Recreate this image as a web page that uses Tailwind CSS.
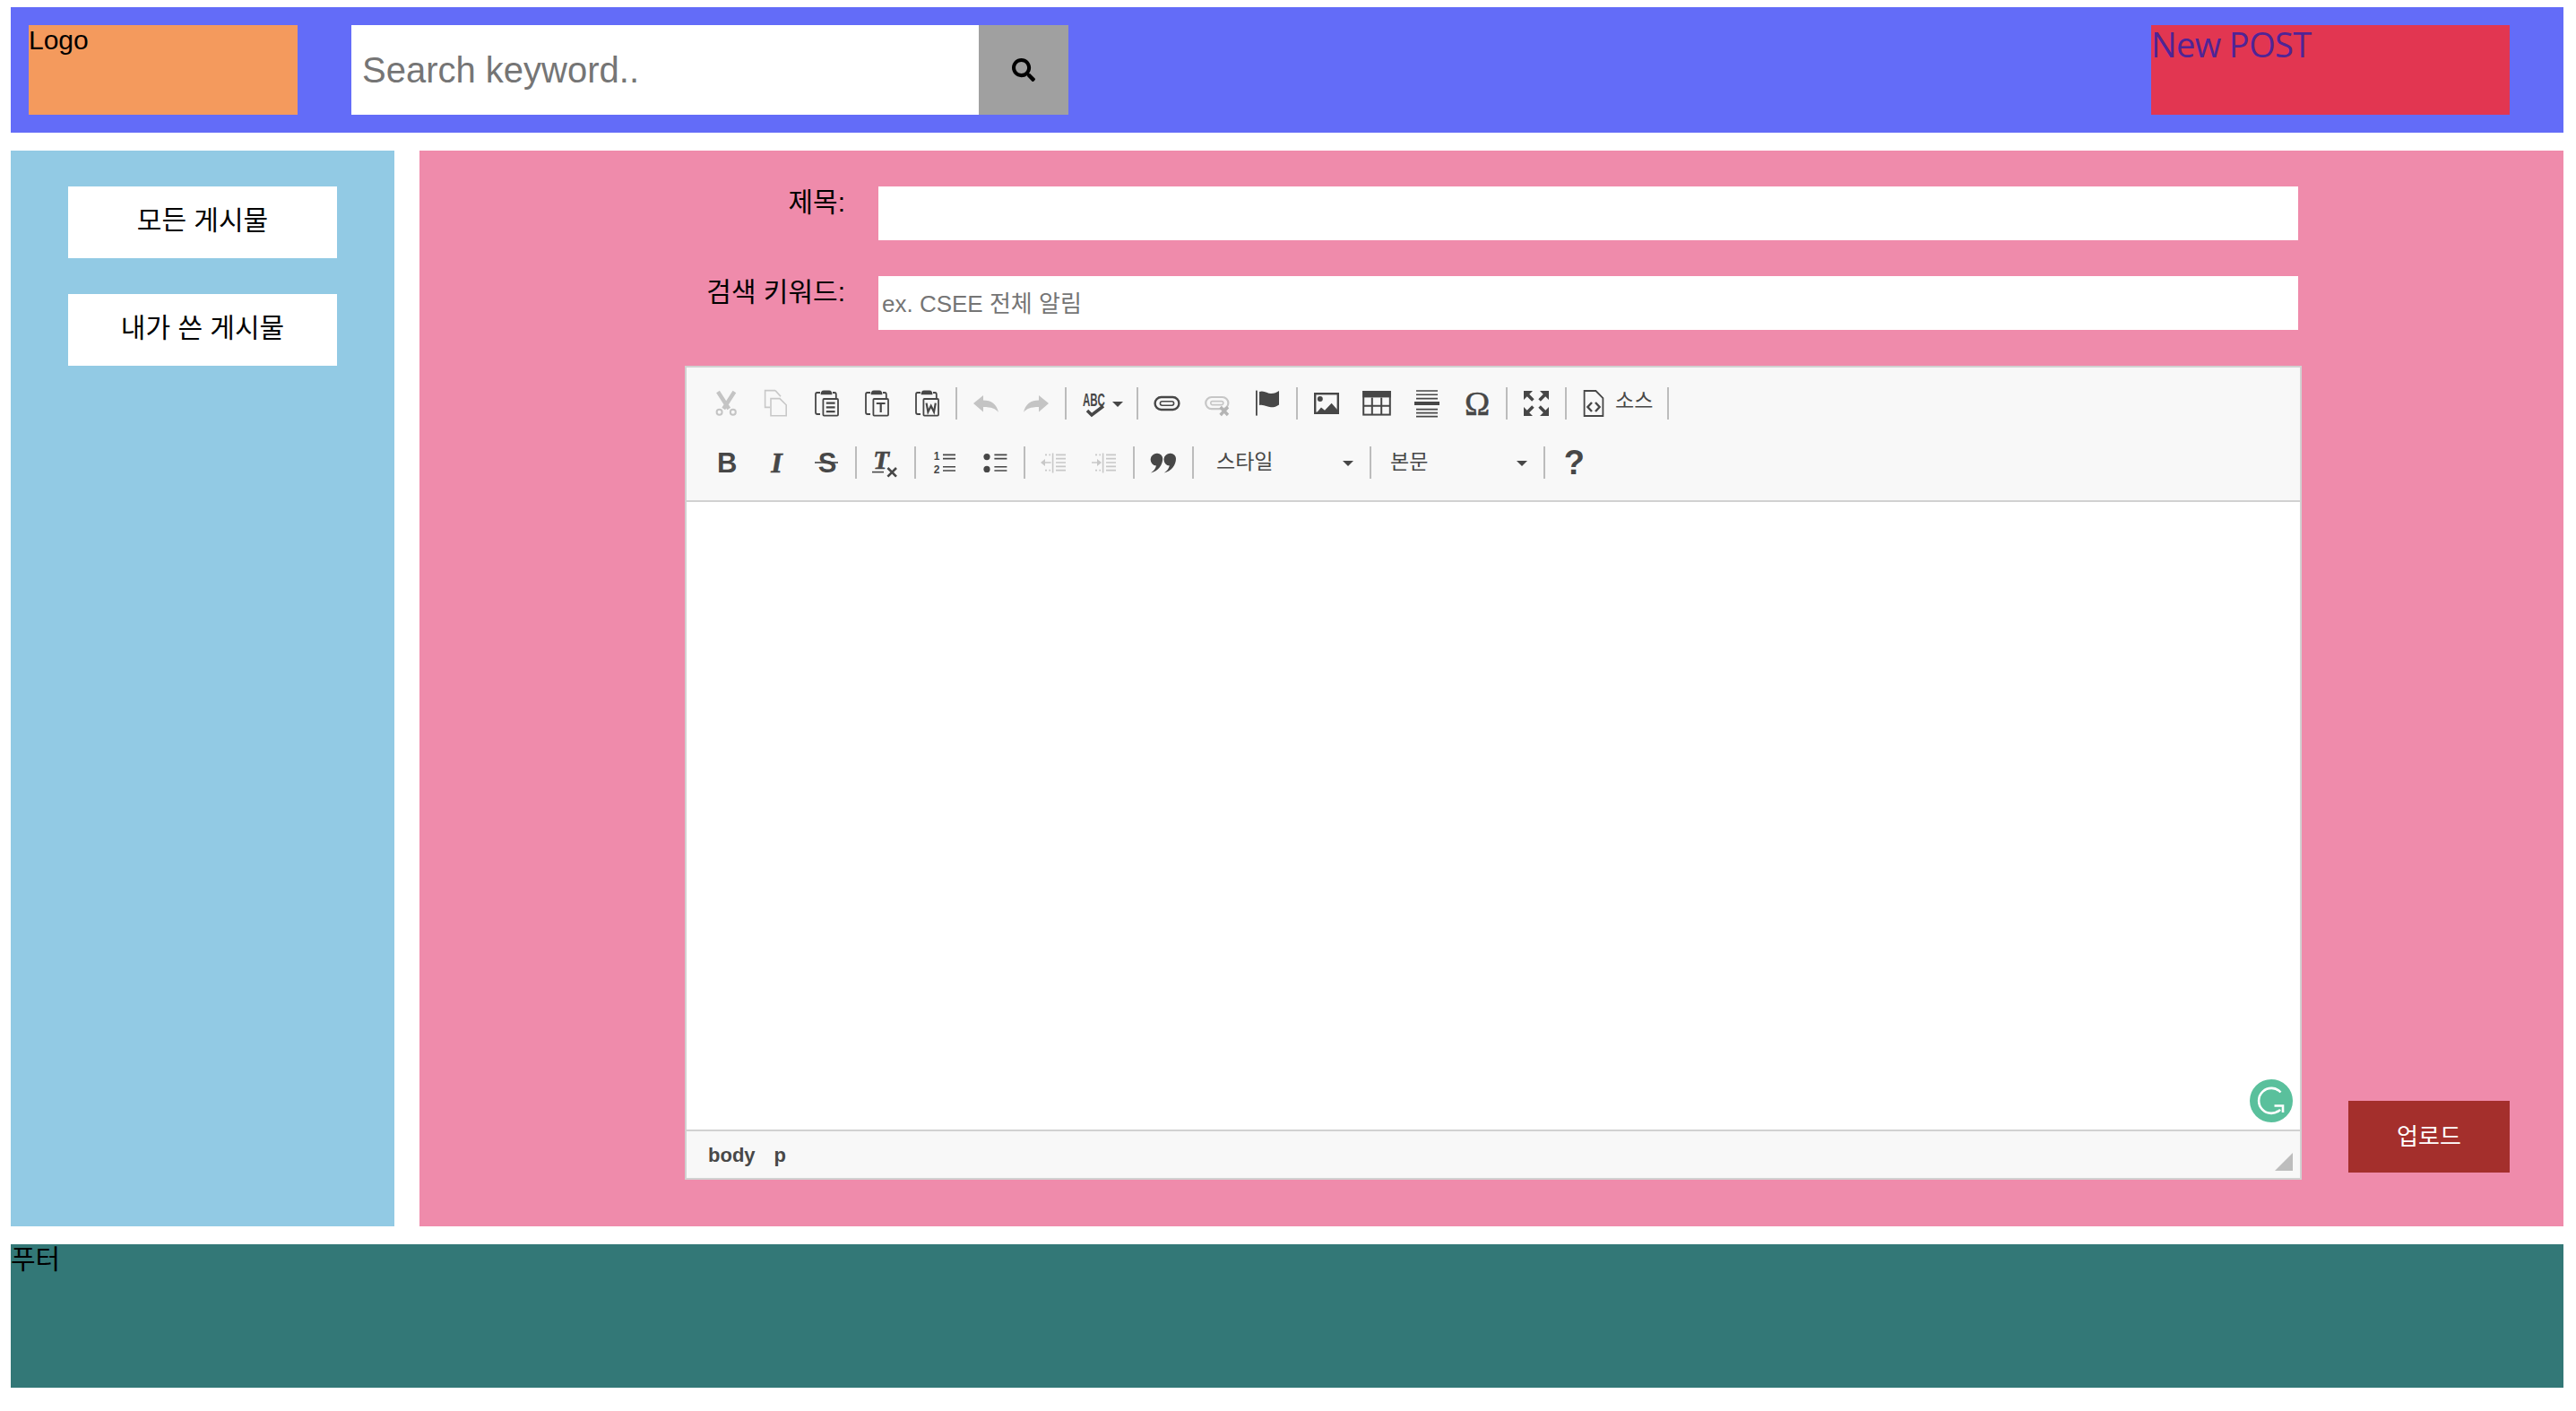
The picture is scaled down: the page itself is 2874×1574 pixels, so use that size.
<!DOCTYPE html>
<html lang="ko">
<head>
<meta charset="utf-8">
<title>New POST</title>
<script src="https://cdn.jsdelivr.net/npm/@tailwindcss/browser@4"></script>
</head>
<body class="bg-white text-black font-['Liberation_Sans','Noto_Sans_CJK_KR',sans-serif]">
<div class="w-[2874px] h-[1574px] overflow-hidden pt-2 px-3 flex flex-col gap-5">

  <header class="w-[2848px] h-[140px] shrink-0 bg-[#636cf8] flex items-center">
    <div class="ml-5 w-[300px] h-[100px] bg-[#f49a5d] text-[30px] leading-[34px]">Logo</div>
    <form class="ml-[60px] flex h-[100px]">
      <input class="w-[700px] h-full bg-white px-3 text-[40px] outline-none placeholder:text-[#757575]" type="text" placeholder="Search keyword..">
      <button type="button" class="w-[100px] h-full bg-[#a0a0a0] flex items-center justify-center">
        <svg class="w-[26px] h-[26px] fill-black" viewBox="0 0 512 512"><path d="M505 442.7L405.3 343c-4.5-4.5-10.6-7-17-7H372c27.6-35.3 44-79.7 44-128C416 93.1 322.9 0 208 0S0 93.1 0 208s93.1 208 208 208c48.3 0 92.7-16.4 128-44v16.3c0 6.4 2.5 12.5 7 17l99.7 99.7c9.4 9.4 24.6 9.4 33.9 0l28.3-28.3c9.4-9.4 9.4-24.6.1-34zM208 336c-70.7 0-128-57.2-128-128 0-70.7 57.2-128 128-128 70.7 0 128 57.2 128 128 0 70.7-57.2 128-128 128z"/></svg>
      </button>
    </form>
    <button type="button" class="ml-auto mr-[60px] w-[400px] h-[100px] bg-[#e23651] text-[#4f2496] text-[38px] tracking-[-0.6px] leading-[42px] text-left flex items-start font-['Open_Sans',sans-serif]">New POST</button>
  </header>

  <div class="flex gap-[28px] h-[1200px] shrink-0">
    <aside class="w-[428px] bg-[#92cae4] pt-10 pl-16 flex flex-col gap-10">
      <button type="button" class="w-[300px] h-20 bg-white text-[30px] pb-[6px]">모든 게시물</button>
      <button type="button" class="w-[300px] h-20 bg-white text-[30px] pb-[6px]">내가 쓴 게시물</button>
    </aside>

    <main class="w-[2392px] bg-[#ef8bab] pt-10 flex flex-col gap-10">
      <div class="flex h-[60px]">
        <label class="w-[475px] text-right text-[30px] leading-[36px]">제목:</label>
        <input type="text" class="ml-[37px] w-[1584px] h-full bg-white outline-none">
      </div>
      <div class="flex h-[60px]">
        <label class="w-[475px] text-right text-[30px] leading-[36px]">검색 키워드:</label>
        <input type="text" placeholder="ex. CSEE 전체 알림" class="ml-[37px] w-[1584px] h-full bg-white px-[4px] pt-[2px] text-[26px] outline-none placeholder:text-[#757575]">
      </div>

      <div class="flex items-end">
        <div class="ml-[296px] w-[1804px] h-[908px] border-2 border-[#d1d1d1] bg-white flex flex-col relative">
          <div class="h-[150px] bg-[#f8f8f8] border-b-2 border-[#d1d1d1] pt-[22px] pl-[16px] flex flex-col gap-[30px] text-[#474747]">

            <div class="flex items-center h-9">
              <span class="w-14 h-9 flex items-center justify-center text-[#c4c4c4]"><svg class="w-8 h-8 shrink-0" viewBox="0 0 16 16" fill="none" stroke="currentColor"><path stroke-width="2.200" d="M3.500 1.500L9.600 11M12.700 1.500L6.600 11"/><circle cx="4.300" cy="12.900" r="1.500" stroke-width="1"/><circle cx="11.900" cy="12.900" r="1.500" stroke-width="1"/></svg></span>
              <span class="w-14 h-9 flex items-center justify-center text-[#c8c8c8]"><svg class="w-8 h-8 shrink-0" viewBox="0 0 16 16" fill="none" stroke="currentColor" stroke-width=".8"><path d="M7.500 .8H1.800v9.400H4.500M7.500 .8l3 3.300"/><path d="M5 5.300h5l3.600 3.600v6H5z"/></svg></span>
              <span class="w-14 h-9 flex items-center justify-center"><svg class="w-8 h-8 shrink-0" viewBox="0 0 16 16" fill="none" stroke="currentColor" stroke-width=".9"><path d="M4.500 2H2.800Q2 2 2 3v10q0 1 1 1h1.500M11.500 2h1q.9 0 .9 1v2"/><path fill="currentColor" stroke="none" d="M4.800 3.100q0-2.300 1.700-2.300h3q1.700 0 1.700 2.300z"/><rect x="6.200" y="5.500" width="8.300" height="9.300" rx=".5"/><path stroke-width="1.100" d="M7.900 7.800h4.900M7.900 10.200h4.900M7.900 12.600h4.900"/></svg></span>
              <span class="w-14 h-9 flex items-center justify-center"><svg class="w-8 h-8 shrink-0" viewBox="0 0 16 16" fill="none" stroke="currentColor" stroke-width=".9"><path d="M4.500 2H2.800Q2 2 2 3v10q0 1 1 1h1.500M11.500 2h1q.9 0 .9 1v2"/><path fill="currentColor" stroke="none" d="M4.800 3.100q0-2.300 1.700-2.300h3q1.700 0 1.700 2.300z"/><rect x="6.200" y="5.500" width="8.300" height="9.300" rx=".5"/><path stroke-width="1.100" d="M7.900 8h4.900M10.350 8v5"/></svg></span>
              <span class="w-14 h-9 flex items-center justify-center"><svg class="w-8 h-8 shrink-0" viewBox="0 0 16 16" fill="none" stroke="currentColor" stroke-width=".9"><path d="M4.500 2H2.800Q2 2 2 3v10q0 1 1 1h1.500M11.500 2h1q.9 0 .9 1v2"/><path fill="currentColor" stroke="none" d="M4.800 3.100q0-2.300 1.700-2.300h3q1.700 0 1.700 2.300z"/><rect x="6.200" y="5.500" width="8.300" height="9.300" rx=".5"/><path stroke-width="1.100" d="M7.800 7.800l.9 5 1.650-3.400 1.650 3.400.9-5"/></svg></span>
              <i class="w-[2px] h-9 mx-1 bg-[#bcbcbc]"></i>
              <span class="w-14 h-9 flex items-center justify-center text-[#c4c4c4]"><svg class="w-8 h-8 shrink-0" viewBox="0 0 16 16" fill="currentColor"><path d="M1 8L6.500 3.500V6.300C11 6.300 14 8.500 15 13C13.500 11 11 10 6.500 10V12.700Z"/></svg></span>
              <span class="w-14 h-9 flex items-center justify-center text-[#c4c4c4]"><svg class="w-8 h-8 shrink-0" viewBox="0 0 16 16" fill="currentColor"><path d="M15 8L9.500 3.500V6.300C5 6.300 2 8.500 1 13C2.500 11 5 10 9.500 10V12.700Z"/></svg></span>
              <i class="w-[2px] h-9 mx-1 bg-[#bcbcbc]"></i>
              <span class="w-[70px] h-9 flex items-center justify-center"><svg class="w-[70px] h-9 shrink-0" viewBox="0 0 70 36" fill="currentColor"><text transform="translate(14 21) scale(1 1.800)" font-size="11.500" font-weight="700" class="font-['Liberation_Sans',sans-serif]">ABC</text><path fill="none" stroke="currentColor" stroke-width="3.500" d="M19 26l5 5 13-10"/><path d="M47 16h12l-6 6z"/></svg></span>
              <i class="w-[2px] h-9 mx-1 bg-[#bcbcbc]"></i>
              <span class="w-14 h-9 flex items-center justify-center"><svg class="w-8 h-8 shrink-0" viewBox="0 0 16 16" fill="none" stroke="currentColor"><rect x="1.300" y="4.500" width="13.400" height="7" rx="3.500" stroke-width="1.200"/><rect x="4.200" y="6.900" width="7.600" height="2.200" rx="1.100" stroke-width=".8"/></svg></span>
              <span class="w-14 h-9 flex items-center justify-center text-[#c6c6c6]"><svg class="w-8 h-8 shrink-0" viewBox="0 0 16 16" fill="none" stroke="currentColor"><rect x="1.600" y="4.500" width="12.600" height="6.600" rx="3.300" stroke-width="1.100"/><rect x="4.400" y="6.800" width="7" height="2" rx="1" stroke-width=".8"/><path stroke="#b4b4b4" stroke-width="1.700" d="M9.800 10l4.200 4.500M14 10l-4.200 4.500"/></svg></span>
              <span class="w-14 h-9 flex items-center justify-center"><svg class="w-8 h-8 shrink-0" viewBox="0 0 16 16" fill="currentColor"><rect x="1.500" y=".8" width=".9" height="14"/><path d="M3.500 1.500C6 .5 8 2.500 10 2.500 12 2.500 13 2 14.500 1V8.700C13 9.700 12 10.100 10 10.100 8 10.100 6 8.400 3.500 9Z"/></svg></span>
              <i class="w-[2px] h-9 mx-1 bg-[#bcbcbc]"></i>
              <span class="w-14 h-9 flex items-center justify-center"><svg class="w-8 h-8 shrink-0" viewBox="0 0 16 16" fill="currentColor"><rect x="1.600" y="2.600" width="12.800" height="10.800" fill="none" stroke="currentColor" stroke-width="1.200"/><circle cx="4.400" cy="5.500" r="1.500"/><path d="M2 13.700L5 10.300 7 11.900 10.800 7.900 14 11.500V13.700Z"/></svg></span>
              <span class="w-14 h-9 flex items-center justify-center"><svg class="w-8 h-8 shrink-0" viewBox="0 0 16 16" fill="none" stroke="currentColor"><path fill="currentColor" stroke="none" d="M.1 1h15.800v3.700H.1z"/><rect x=".6" y="1.500" width="14.800" height="12.800"/><path d="M5.400 4.700v9.600M10.600 4.700v9.600M.6 9.400h14.800"/></svg></span>
              <span class="w-14 h-9 flex items-center justify-center"><svg class="w-8 h-8 shrink-0" viewBox="0 0 16 16" fill="none" stroke="currentColor" stroke-width=".8"><path d="M2 1h12M2 3.100h12M2 5.300h12M2 11.300h12M2 13.300h12M2 15.300h12"/><path stroke-width="2" d="M1 8h14"/></svg></span>
              <span class="w-14 h-9 flex items-center justify-center"><svg class="w-8 h-8 shrink-0 overflow-visible" viewBox="0 0 16 16" fill="currentColor" stroke="currentColor" stroke-width=".25"><text x="8" y="14.600" text-anchor="middle" font-size="19" class="font-['Liberation_Serif',serif]">Ω</text></svg></span>
              <i class="w-[2px] h-9 mx-1 bg-[#bcbcbc]"></i>
              <span class="w-14 h-9 flex items-center justify-center"><svg class="w-8 h-8 shrink-0" viewBox="0 0 16 16" fill="currentColor" stroke="currentColor"><path stroke="none" d="M1 1h5L1 6zM15 1h-5l5 5zM1 15h5l-5-5zM15 15h-5l5-5z"/><path stroke-width="1.800" d="M2 2l4.200 4.200M14 2L9.800 6.200M2 14l4.200-4.200M14 14L9.800 9.800"/></svg></span>
              <i class="w-[2px] h-9 mx-1 bg-[#bcbcbc]"></i>
              <span class="w-[104px] h-9 pl-[10px] flex items-center text-[23px]"><svg class="w-8 h-8 shrink-0" viewBox="0 0 16 16" fill="none" stroke="currentColor" stroke-width=".9"><path d="M2.800 1h6.400l4 4v10H2.800z"/><path stroke-width="1.200" d="M7 7.500L4.700 10 7 12.500M9 7.500L11.300 10 9 12.500"/></svg><span class="ml-2 -mt-[6px]">소스</span></span>
              <i class="w-[2px] h-9 mx-1 bg-[#bcbcbc]"></i>
            </div>

            <div class="flex items-center h-9">
              <span class="w-14 h-9 flex items-center justify-center"><svg class="w-8 h-8 shrink-0 overflow-visible" viewBox="0 0 16 16" fill="currentColor"><text x="8.600" y="13.500" text-anchor="middle" font-size="15.500" font-weight="700" class="font-['Liberation_Sans',sans-serif]">B</text></svg></span>
              <span class="w-14 h-9 flex items-center justify-center"><svg class="w-8 h-8 shrink-0 overflow-visible" viewBox="0 0 16 16" fill="currentColor" stroke="currentColor" stroke-width=".3"><text x="8.200" y="13.500" text-anchor="middle" font-size="16" font-weight="700" font-style="italic" class="font-['Liberation_Serif',serif]">I</text></svg></span>
              <span class="w-14 h-9 flex items-center justify-center"><svg class="w-8 h-8 shrink-0 overflow-visible" viewBox="0 0 16 16" fill="currentColor" stroke="currentColor"><text x="8.500" y="13.500" stroke="none" text-anchor="middle" font-size="15.500" font-weight="700" class="font-['Liberation_Sans',sans-serif]">S</text><path stroke-width=".8" d="M1.500 8h13"/></svg></span>
              <i class="w-[2px] h-9 mx-1 bg-[#bcbcbc]"></i>
              <span class="w-14 h-9 flex items-center justify-center"><svg class="w-8 h-8 shrink-0 overflow-visible" viewBox="0 0 16 16" fill="currentColor" stroke="currentColor"><text x="5.600" y="11.500" stroke-width=".3" text-anchor="middle" font-size="14.500" font-weight="700" font-style="italic" class="font-['Liberation_Serif',serif]">T</text><path stroke-width=".8" d="M.5 13.300H7"/><path stroke-width="1.300" d="M9.200 11l4.800 4.800M14 11l-4.800 4.800"/></svg></span>
              <i class="w-[2px] h-9 mx-1 bg-[#bcbcbc]"></i>
              <span class="w-14 h-9 flex items-center justify-center"><svg class="w-8 h-8 shrink-0 overflow-visible" viewBox="0 0 16 16" fill="currentColor" stroke="currentColor"><text x="3.500" y="6.500" stroke="none" text-anchor="middle" font-size="6" font-weight="700" class="font-['Liberation_Sans',sans-serif]">1</text><text x="3.500" y="13.800" stroke="none" text-anchor="middle" font-size="6" font-weight="700" class="font-['Liberation_Sans',sans-serif]">2</text><path stroke-width=".8" d="M7 3.700h7M7 5.800h7M7 10.400h7M7 12.500h7"/></svg></span>
              <span class="w-14 h-9 flex items-center justify-center"><svg class="w-8 h-8 shrink-0" viewBox="0 0 16 16" fill="currentColor" stroke="currentColor"><circle cx="3.500" cy="4.800" r="1.800" stroke="none"/><circle cx="3.500" cy="11.700" r="1.800" stroke="none"/><path stroke-width=".8" d="M7.700 3.700h7M7.700 5.800h7M7.700 10.400h7M7.700 12.500h7"/></svg></span>
              <i class="w-[2px] h-9 mx-1 bg-[#bcbcbc]"></i>
              <span class="w-14 h-9 flex items-center justify-center text-[#c8c8c8]"><svg class="w-8 h-8 shrink-0" viewBox="0 0 16 16" fill="currentColor" stroke="currentColor" stroke-width=".8"><path d="M7.300 2.800v11M9 3.700h5.500M9 5.800h5.500M9 8h5.500M9 10.200h5.500M9 12.300h5.500M2.500 8h3.800"/><path stroke="none" d="M.5 8L3 6v4z"/><path stroke-width=".9" stroke-dasharray="1 1.200" d="M3 3.700h3M3 12.300h3"/></svg></span>
              <span class="w-14 h-9 flex items-center justify-center text-[#c8c8c8]"><svg class="w-8 h-8 shrink-0" viewBox="0 0 16 16" fill="currentColor" stroke="currentColor" stroke-width=".8"><path d="M7.300 2.800v11M9 3.700h5.500M9 5.800h5.500M9 8h5.500M9 10.200h5.500M9 12.300h5.500M1 8h3.800"/><path stroke="none" d="M6.500 8L4 6v4z"/><path stroke-width=".9" stroke-dasharray="1 1.200" d="M3 3.700h3M3 12.300h3"/></svg></span>
              <i class="w-[2px] h-9 mx-1 bg-[#bcbcbc]"></i>
              <span class="w-14 h-9 flex items-center justify-center"><svg class="w-8 h-8 shrink-0" viewBox="0 0 16 16" fill="currentColor"><path d="M4.600 2.900a3 3 0 0 1 3 3c0 3.500-2.500 6.800-6.600 7.900 1.600-1.200 2.600-2.300 3-4a3 3 0 0 1 .6-6.900z"/><path d="M12 2.900a3 3 0 0 1 3 3c0 3.500-2.500 6.800-6.600 7.900 1.600-1.200 2.600-2.300 3-4a3 3 0 0 1 .6-6.900z"/></svg></span>
              <i class="w-[2px] h-9 mx-1 bg-[#bcbcbc]"></i>
              <span class="w-[188px] h-9 pl-[21px] pr-[14px] flex items-center justify-between text-[23px]"><span class="-mt-[2px]">스타일</span><svg class="w-3 h-[6px] mt-[1px]" viewBox="0 0 12 6" fill="currentColor"><path d="M0 0h12L6 6z"/></svg></span>
              <i class="w-[2px] h-9 mx-1 bg-[#bcbcbc]"></i>
              <span class="w-[184px] h-9 pl-[17px] pr-[14px] flex items-center justify-between text-[23px]"><span class="-mt-[2px]">본문</span><svg class="w-3 h-[6px] mt-[1px]" viewBox="0 0 12 6" fill="currentColor"><path d="M0 0h12L6 6z"/></svg></span>
              <i class="w-[2px] h-9 mx-1 bg-[#bcbcbc]"></i>
              <span class="w-14 h-9 flex items-center justify-center"><svg class="w-8 h-8 shrink-0 overflow-visible" viewBox="0 0 16 16" fill="currentColor"><text x="8.200" y="14.700" text-anchor="middle" font-size="19" font-weight="700" class="font-['Liberation_Sans',sans-serif]">?</text></svg></span>
            </div>
          </div>

          <div class="grow bg-white"></div>

          <div class="h-[54px] bg-[#f8f8f8] border-t-2 border-[#d1d1d1] pl-[24px] flex items-center gap-[21px] text-[22px] font-bold text-[#484848] relative">
            <span>body</span><span>p</span>
            <svg class="absolute right-2 bottom-2 w-5 h-5 fill-[#bdbdbd]" viewBox="0 0 20 20"><path d="M20 0V20H0Z"/></svg>
          </div>

          <svg class="absolute right-2 bottom-[62px] w-12 h-12" viewBox="0 0 48 48" fill="none"><circle cx="24" cy="24" r="24" fill="#5ac09c"/><path stroke="#fff" stroke-width="2.600" d="M34.500 14.500A14 14 0 1 0 34 33.800"/><path stroke="#fff" stroke-width="2.600" d="M27.500 29.500H37V37"/></svg>
        </div>
        <button type="button" class="ml-[52px] mb-2 w-[180px] h-20 bg-[#a42f2c] text-white text-[26px]">업로드</button>
      </div>
    </main>
  </div>

  <footer class="w-[2848px] h-[160px] shrink-0 bg-[#337877] text-[30px] leading-[34px]">푸터</footer>
</div>
</body>
</html>
